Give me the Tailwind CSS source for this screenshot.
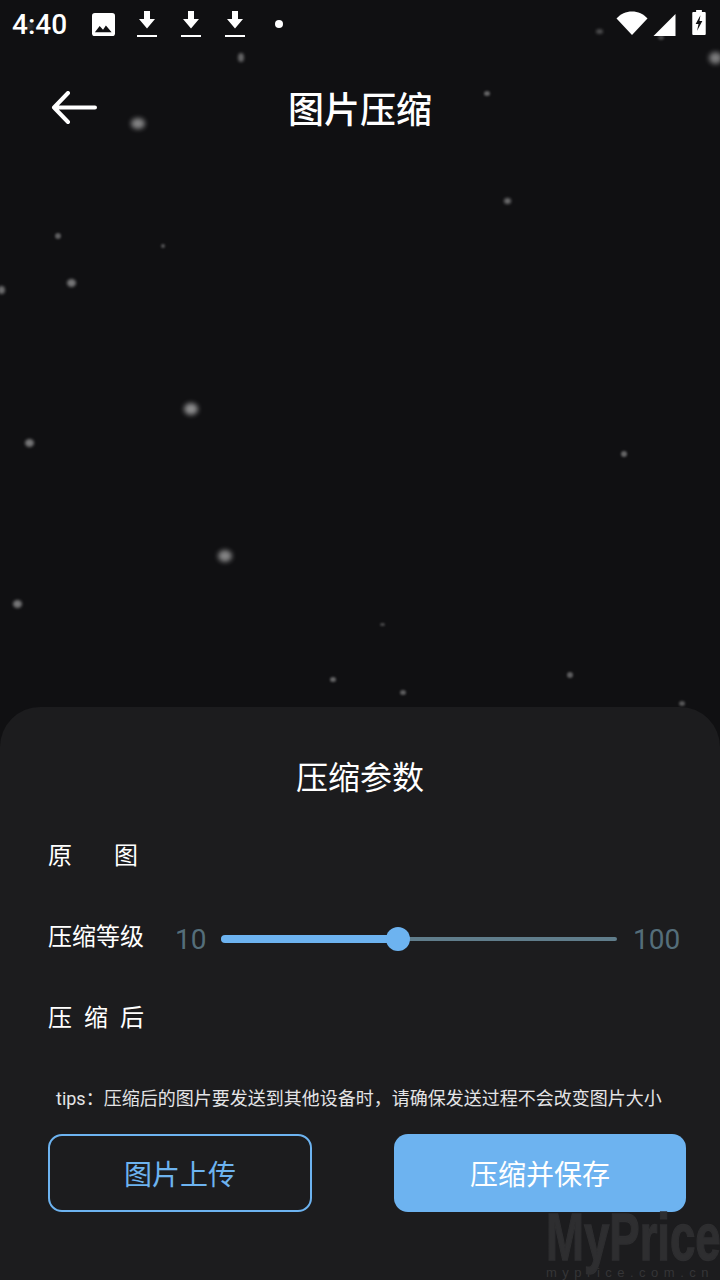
<!DOCTYPE html>
<html lang="zh-CN">
<head>
  <meta charset="UTF-8" />
  <title>图片压缩</title>
  <script src="https://cdn.jsdelivr.net/npm/@tailwindcss/browser@4"></script>
</head>
<body class="bg-[#101012]">
  <div class="relative w-[720px] h-[1280px] overflow-hidden bg-[#101012] flex flex-col text-white font-['Noto_Sans_CJK_SC','Noto_Sans',sans-serif]">

    <!-- Stars -->
    <div id="stars" class="absolute inset-0"></div>

    <!-- Status bar -->
    <div class="relative h-[50px] shrink-0 flex items-center pl-[12px] pr-[14px] pb-[2px]">
      <span class="font-['Roboto',sans-serif] font-medium text-[28px] leading-none w-[80px] mt-[2px]">4:40</span>
      <svg class="w-[23px] h-[23px]" viewBox="0 0 24 24"><path fill="#fff" d="M3 0h18a3 3 0 0 1 3 3v18a3 3 0 0 1-3 3H3a3 3 0 0 1-3-3V3a3 3 0 0 1 3-3z"/><path fill="#101012" d="M3 20l5-6.500 3.500 4 3-4.500 6 7z"/></svg>
      <svg class="w-[20px] h-[26px] ml-[22px]" viewBox="0 0 20 26"><path fill="#fff" d="M7 0h6v8h5l-8 9.500L2 8h5zM0 24h20v2H0z"/></svg>
      <svg class="w-[20px] h-[26px] ml-[24px]" viewBox="0 0 20 26"><path fill="#fff" d="M7 0h6v8h5l-8 9.500L2 8h5zM0 24h20v2H0z"/></svg>
      <svg class="w-[20px] h-[26px] ml-[24px]" viewBox="0 0 20 26"><path fill="#fff" d="M7 0h6v8h5l-8 9.500L2 8h5zM0 24h20v2H0z"/></svg>
      <span class="w-[8px] h-[8px] rounded-full bg-white ml-[30px]"></span>
      <svg class="w-[32px] h-[24px] ml-auto mb-[2px]" viewBox="0 0 32 24"><path fill="#fff" d="M0.500 7.500C4.500 3 10 0.500 16 0.500s11.500 2.500 15.500 7L16 24z"/></svg>
      <svg class="w-[23px] h-[22px] ml-[5px] mt-[1px]" viewBox="0 0 23 23"><path fill="#fff" d="M23 0v23H0z"/></svg>
      <svg class="w-[14px] h-[25px] ml-[16px] mb-[3px]" viewBox="0 0 14 26"><path fill="#fff" fill-rule="evenodd" d="M4 0h6v2h3a1 1 0 0 1 1 1v22a1 1 0 0 1-1 1H1a1 1 0 0 1-1-1V3a1 1 0 0 1 1-1h3zM8.500 5.500 3.500 14.500h3l-1.500 7 5.500-10H7.500z"/></svg>
    </div>

    <!-- Header -->
    <div class="relative h-[120px] shrink-0 flex items-center justify-center pb-[7px]">
      <svg class="absolute left-[51px] top-[41px] w-[46px] h-[34px]" viewBox="0 0 46 34" fill="none" stroke="#fff" stroke-width="4" stroke-linecap="round" stroke-linejoin="round"><path d="M44 16.500H3M17 2 3 16.500 17 31"/></svg>
      <h1 class="text-[36px] leading-none font-medium">图片压缩</h1>
    </div>

    <!-- Parameters panel -->
    <div class="relative mt-auto h-[573px] bg-[#1c1c1e] rounded-t-[40px] flex flex-col">
      <h2 class="text-[32px] leading-none text-center mt-[52px]">压缩参数</h2>

      <div class="flex justify-between w-[90px] ml-[48px] mt-[49px] text-[24px] leading-[28px]"><span>原</span><span>图</span></div>

      <div class="flex items-center ml-[48px] mt-[56px] h-[28px]">
        <span class="text-[24px] leading-[28px] w-[127px] mb-[6px]">压缩等级</span>
        <span class="font-['Roboto',sans-serif] text-[28px] leading-none text-[#546e7a] w-[46px] mt-[4px]">10</span>
        <div class="relative w-[396px] h-[4px] bg-[#607d8b] rounded-full mt-[2px]">
          <div class="absolute left-0 top-[-2px] w-[177px] h-[8px] bg-[#6db3f0] rounded-full"></div>
          <div class="absolute left-[165px] top-[-10px] w-[24px] h-[24px] bg-[#6db3f0] rounded-full"></div>
        </div>
        <span class="font-['Roboto',sans-serif] text-[28px] leading-none text-[#546e7a] ml-[16px] mt-[4px]">100</span>
      </div>

      <div class="flex justify-between w-[96px] ml-[48px] mt-[50px] text-[24px] leading-[28px]"><span>压</span><span>缩</span><span>后</span></div>

      <p class="font-['Roboto','Noto_Sans_CJK_SC',sans-serif] text-[18px] leading-[24px] text-[#e4e4e6] ml-[56px] mt-[57px] whitespace-nowrap">tips：压缩后的图片要发送到其他设备时，请确保发送过程不会改变图片大小</p>

      <div class="flex ml-[48px] mt-[23px]">
        <button class="w-[264px] h-[78px] border-2 border-[#6db3f0] rounded-[14px] text-[#6db3f0] text-[28px]">图片上传</button>
        <button class="w-[292px] h-[78px] ml-[82px] bg-[#6db3f0] rounded-[14px] text-white text-[28px]">压缩并保存</button>
      </div>

      <!-- Watermark -->
      <div class="absolute left-[546px] top-[503px] pointer-events-none">
        <div class="font-['Liberation_Sans',sans-serif] font-bold text-[66px] leading-[54px] origin-left scale-x-[0.69] whitespace-nowrap text-[#2e2e30] [-webkit-text-stroke:1.500px_#2e2e30]">MyPrice</div>
        <div class="font-['Liberation_Sans',sans-serif] text-[13px] leading-[14px] mt-[2px] tracking-[5.500px] whitespace-nowrap text-[#353537]">myprice.com.cn</div>
      </div>
    </div>
  </div>

  <script>
    // x, y, width, height, opacity
    const stars = [
      [138,123,14,11,.75],[241,57,6,9,.55],[487,93,6,5,.55],[599,31,7,5,.4],[661,37,6,5,.35],[715,58,13,12,.7],
      [507,201,7,6,.6],[58,236,6,6,.5],[163,246,4,4,.45],[71,283,9,8,.65],[1,290,7,8,.6],
      [191,409,14,12,.8],[29,443,9,8,.65],[624,454,6,6,.55],[225,556,14,12,.75],[17,604,9,8,.65],
      [382,624,5,3,.4],[333,679,6,5,.55],[403,692,6,5,.5],[570,675,6,6,.5],[682,703,6,5,.45],[30,26,8,8,.2]
    ];
    const box = document.getElementById('stars');
    stars.forEach(([x, y, w, h, o]) => {
      const dot = document.createElement('div');
      dot.style.cssText = `position:absolute;left:${x - w / 2}px;top:${y - h / 2}px;width:${w}px;height:${h}px;border-radius:50%;background:rgba(255,255,255,${o * 0.65});filter:blur(${Math.max(w, h) / 5}px)`;
      box.appendChild(dot);
    });
  </script>
</body>
</html>
